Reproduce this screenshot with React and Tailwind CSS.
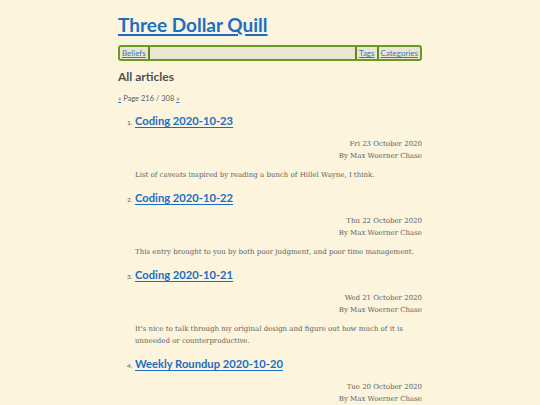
const articles = [
  {
    title: 'Coding 2020-10-23',
    date: 'Fri 23 October 2020',
    summary: 'List of caveats inspired by reading a bunch of Hillel Wayne, I think.',
  },
  {
    title: 'Coding 2020-10-22',
    date: 'Thu 22 October 2020',
    summary: 'This entry brought to you by both poor judgment, and poor time management.',
  },
  {
    title: 'Coding 2020-10-21',
    date: 'Wed 21 October 2020',
    summary:
      'It\u2019s nice to talk through my original design and figure out how much of it is unneeded or counterproductive.',
  },
  {
    title: 'Weekly Roundup 2020-10-20',
    date: 'Tue 20 October 2020',
    summary: 'Some stuff happened this week.',
  },
];

const sans = { fontFamily: 'Lato, "Open Sans", sans-serif' };
const serif = { fontFamily: '"DejaVu Serif", "Liberation Serif", serif' };

const App = () => {
  return (
    <div className="h-[405px] overflow-hidden bg-[#fcf4dd] text-[#55595d]" style={serif}>
      <div className="mx-auto w-[304px] pt-[13px]">
        {/* Site title */}
        <h1 className="text-[19px] leading-[24px] font-bold" style={sans}>
          <a href="#" className="text-[#1b6ec2] underline decoration-2 underline-offset-2">
            Three Dollar Quill
          </a>
        </h1>

        {/* Nav bar */}
        <nav
          className="mt-[8px] flex h-[16px] items-stretch rounded-[3px] border-2 border-[#6a9a1f] bg-[#ebe5d1] text-[8px] leading-[12px]"
          style={sans}
        >
          <a href="#" className="px-[2px] text-[#3a78b8] underline">Beliefs</a>
          <span className="w-[2px] bg-[#5e8d17]" />
          <div className="flex-1" />
          <span className="w-[2px] bg-[#5e8d17]" />
          <a href="#" className="px-[2px] text-[#3a78b8] underline">Tags</a>
          <span className="w-[2px] bg-[#5e8d17]" />
          <a href="#" className="px-[2px] text-[#3a78b8] underline">Categories</a>
        </nav>

        {/* Heading */}
        <h2 className="mt-[8px] text-[12px] leading-[16px] font-bold text-[#4c5156]" style={sans}>
          All articles
        </h2>

        <p className="mt-[9px] text-[7.5px] leading-[10px] text-[#5a5e62]" style={sans}>
          <a href="#" className="text-[#3a78b8] underline">«</a> Page 216 / 308{' '}
          <a href="#" className="text-[#3a78b8] underline">»</a>
        </p>

        {/* Article list */}
        <ol className="mt-[8px] pl-[17px]">
          {articles.map((a, i) => (
            <li key={a.title} className="mb-[8px] flex flex-col">
              <div className="flex items-baseline">
                <span className="-ml-[8px] w-[8px] text-[6.5px] text-[#5a5e62]" style={sans}>
                  {i + 1}.
                </span>
                <a
                  href="#"
                  className="text-[11.2px] leading-[18px] font-bold text-[#1b6ec2] underline decoration-1 underline-offset-2"
                  style={sans}
                >
                  {a.title}
                </a>
              </div>
              <div className="mt-[8px] text-right text-[7px] leading-[12px] text-[#5e6266]">
                <div>{a.date}</div>
                <div>By Max Woerner Chase</div>
              </div>
              <p className="mt-[7px] text-[7px] leading-[12px] text-[#5e6266]">{a.summary}</p>
            </li>
          ))}
        </ol>
      </div>
    </div>
  );
};

export default App;
